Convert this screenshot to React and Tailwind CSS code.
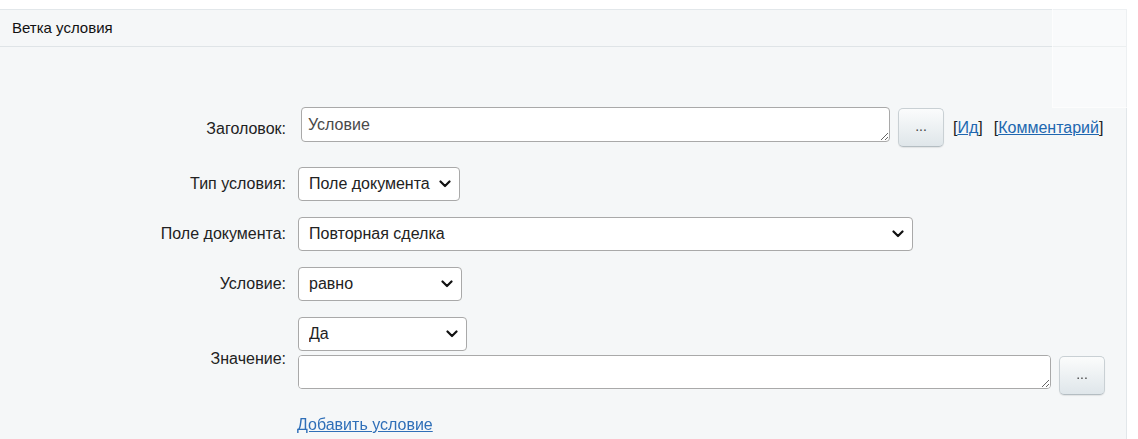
import React from 'react';

const font = { fontFamily: '"Liberation Sans", Arial, sans-serif' };

function Chevron() {
  return (
    <svg className="pointer-events-none absolute right-[9px] top-1/2 -translate-y-1/2" width="12" height="8" viewBox="0 0 12 8">
      <path d="M1.5 1.5 L6 6 L10.5 1.5" fill="none" stroke="#111" strokeWidth="2.2" strokeLinecap="round" strokeLinejoin="round" />
    </svg>
  );
}

function Select({ value, width }) {
  return (
    <div className={`relative ${width}`}>
      <select
        defaultValue={value}
        className="appearance-none w-full h-[34px] bg-white border border-[#a9a9a9] rounded-[4px] pl-[10px] pr-7 text-[16px] text-[#222] outline-none"
        style={font}
      >
        <option>{value}</option>
      </select>
      <Chevron />
    </div>
  );
}

function DotsButton() {
  return (
    <button className="w-[46px] h-[39px] rounded-[5px] border border-[#c9d0d4] border-b-[#b4bdc2] bg-gradient-to-b from-[#fbfcfc] to-[#dfe6ea] shadow-[0_1px_1px_rgba(0,0,0,0.08)] text-[14px] text-[#444] leading-none pb-[3px]">
      ...
    </button>
  );
}

function Row({ label, children, className = '' }) {
  return (
    <div className={`grid grid-cols-[286px_1fr] gap-x-3 items-center ${className}`}>
      <div className="text-right text-[16px] text-[#222]">{label}</div>
      <div className="flex items-center">{children}</div>
    </div>
  );
}

export default function App() {
  return (
    <div className="relative w-[1138px] h-[439px] bg-white overflow-hidden" style={font}>
      <div className="pt-[9px]">
        <div className="w-[1127px] h-[430px] bg-[#f5f7f8] border-t border-r border-[#e2e7ea]">
          <div className="h-[37px] border-b border-[#dfe4e7] px-3 flex items-center text-[15px] text-[#111]">
            Ветка условия
          </div>

          <div className="pt-[60px]">
            <div className="grid grid-cols-[286px_1fr] gap-x-3 h-[40px]">
              <div className="text-right text-[16px] text-[#222] pt-[10px]">Заголовок:</div>
              <div className="flex items-start">
                <textarea
                  defaultValue="Условие"
                  className="ml-[3px] w-[589px] h-[35px] bg-white border border-[#a9a9a9] rounded-[4px] px-[6px] pt-[7px] pb-[3px] text-[16px] text-[#4a4a4a] leading-[20px] outline-none"
                  style={font}
                />
                <div className="ml-2 mt-[1px]">
                  <DotsButton />
                </div>
                <div className="ml-[9px] mt-[9px] text-[16px] text-[#222] flex gap-[11px]">
                  <span>[<a href="#" className="text-[#2067b0] underline">Ид</a>]</span>
                  <span>[<a href="#" className="text-[#2067b0] underline">Комментарий</a>]</span>
                </div>
              </div>
            </div>

            <Row label="Тип условия:" className="mt-[20px] h-[34px]">
              <Select value="Поле документа" width="w-[162px]" />
            </Row>

            <Row label="Поле документа:" className="mt-[16px] h-[34px]">
              <Select value="Повторная сделка" width="w-[615px]" />
            </Row>

            <Row label="Условие:" className="mt-[16px] h-[34px]">
              <Select value="равно" width="w-[164px]" />
            </Row>

            <div className="mt-[16px] grid grid-cols-[286px_1fr] gap-x-3 items-center">
              <div className="text-right text-[16px] text-[#222] pt-[6px]">Значение:</div>
              <div className="flex flex-col">
                <Select value="Да" width="w-[169px]" />
                <div className="mt-[4px] flex items-start">
                  <textarea
                    className="w-[753px] h-[34px] bg-white border border-[#a9a9a9] rounded-[4px] px-[6px] py-[5px] text-[16px] outline-none"
                    style={font}
                  />
                  <div className="ml-2 mt-[1px]">
                    <DotsButton />
                  </div>
                </div>
              </div>
            </div>

            <div className="grid grid-cols-[286px_1fr] gap-x-3 mt-[18px]">
              <div />
              <a href="#" className="-ml-[1px] text-[16px] text-[#2f6fb8] underline">
                Добавить условие
              </a>
            </div>
          </div>
        </div>
      </div>
      <div className="absolute right-0 top-0 w-[86px] h-[108px] bg-white/40 border-l border-b border-white/60" />
    </div>
  );
}
